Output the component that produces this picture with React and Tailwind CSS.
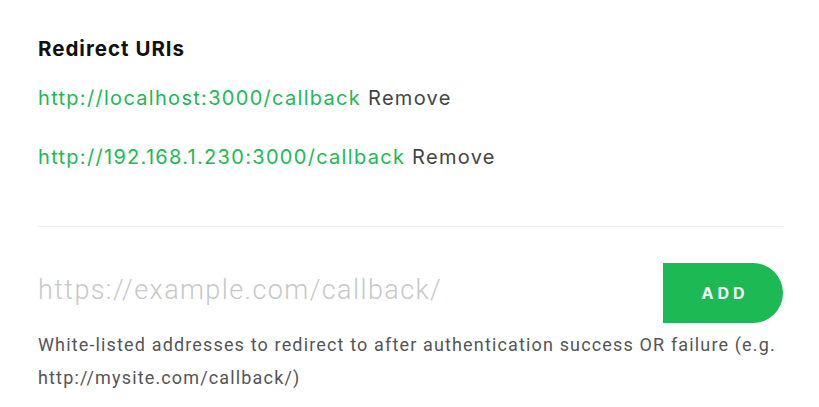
export default function App() {
  const uris = ['http://localhost:3000/callback', 'http://192.168.1.230:3000/callback'];

  return (
    <div className="min-h-screen bg-white pl-[38px] pr-[36px] pt-[36px] font-['Inter',sans-serif]">
      <h2 className="text-[20.5px] font-bold leading-[26px] tracking-[1px] text-[#111]">Redirect URIs</h2>
      <ul className="mt-[23px] flex flex-col gap-[33px]">
        {uris.map((uri) => (
          <li key={uri} className="text-[20px] leading-[26px] tracking-[1.3px]">
            <a href="#" className="text-[#1db954]">{uri}</a>{' '}
            <button type="button" className="text-[#444]">Remove</button>
          </li>
        ))}
      </ul>
      <div className="mt-[56px] border-t border-[#eeeeee]" />
      <div className="mt-[36px] flex items-center">
        <input
          className="min-w-0 flex-1 bg-transparent pb-[5px] font-['Roboto',sans-serif] text-[27px] font-light tracking-[1.4px] text-[#333] outline-none placeholder:text-[#c8c8c8]"
          placeholder="https://example.com/callback/"
        />
        <button type="button" className="h-[60px] w-[120px] rounded-r-full bg-[#1db954] pl-[4px] text-[16px] font-bold tracking-[0.25em] text-white">
          ADD
        </button>
      </div>
      <p className="mt-[5px] font-['Roboto',sans-serif] text-[18px] leading-[33px] tracking-[1.15px] text-[#555]">
        White-listed addresses to redirect to after authentication success OR failure (e.g. http://mysite.com/callback/)
      </p>
    </div>
  );
}
